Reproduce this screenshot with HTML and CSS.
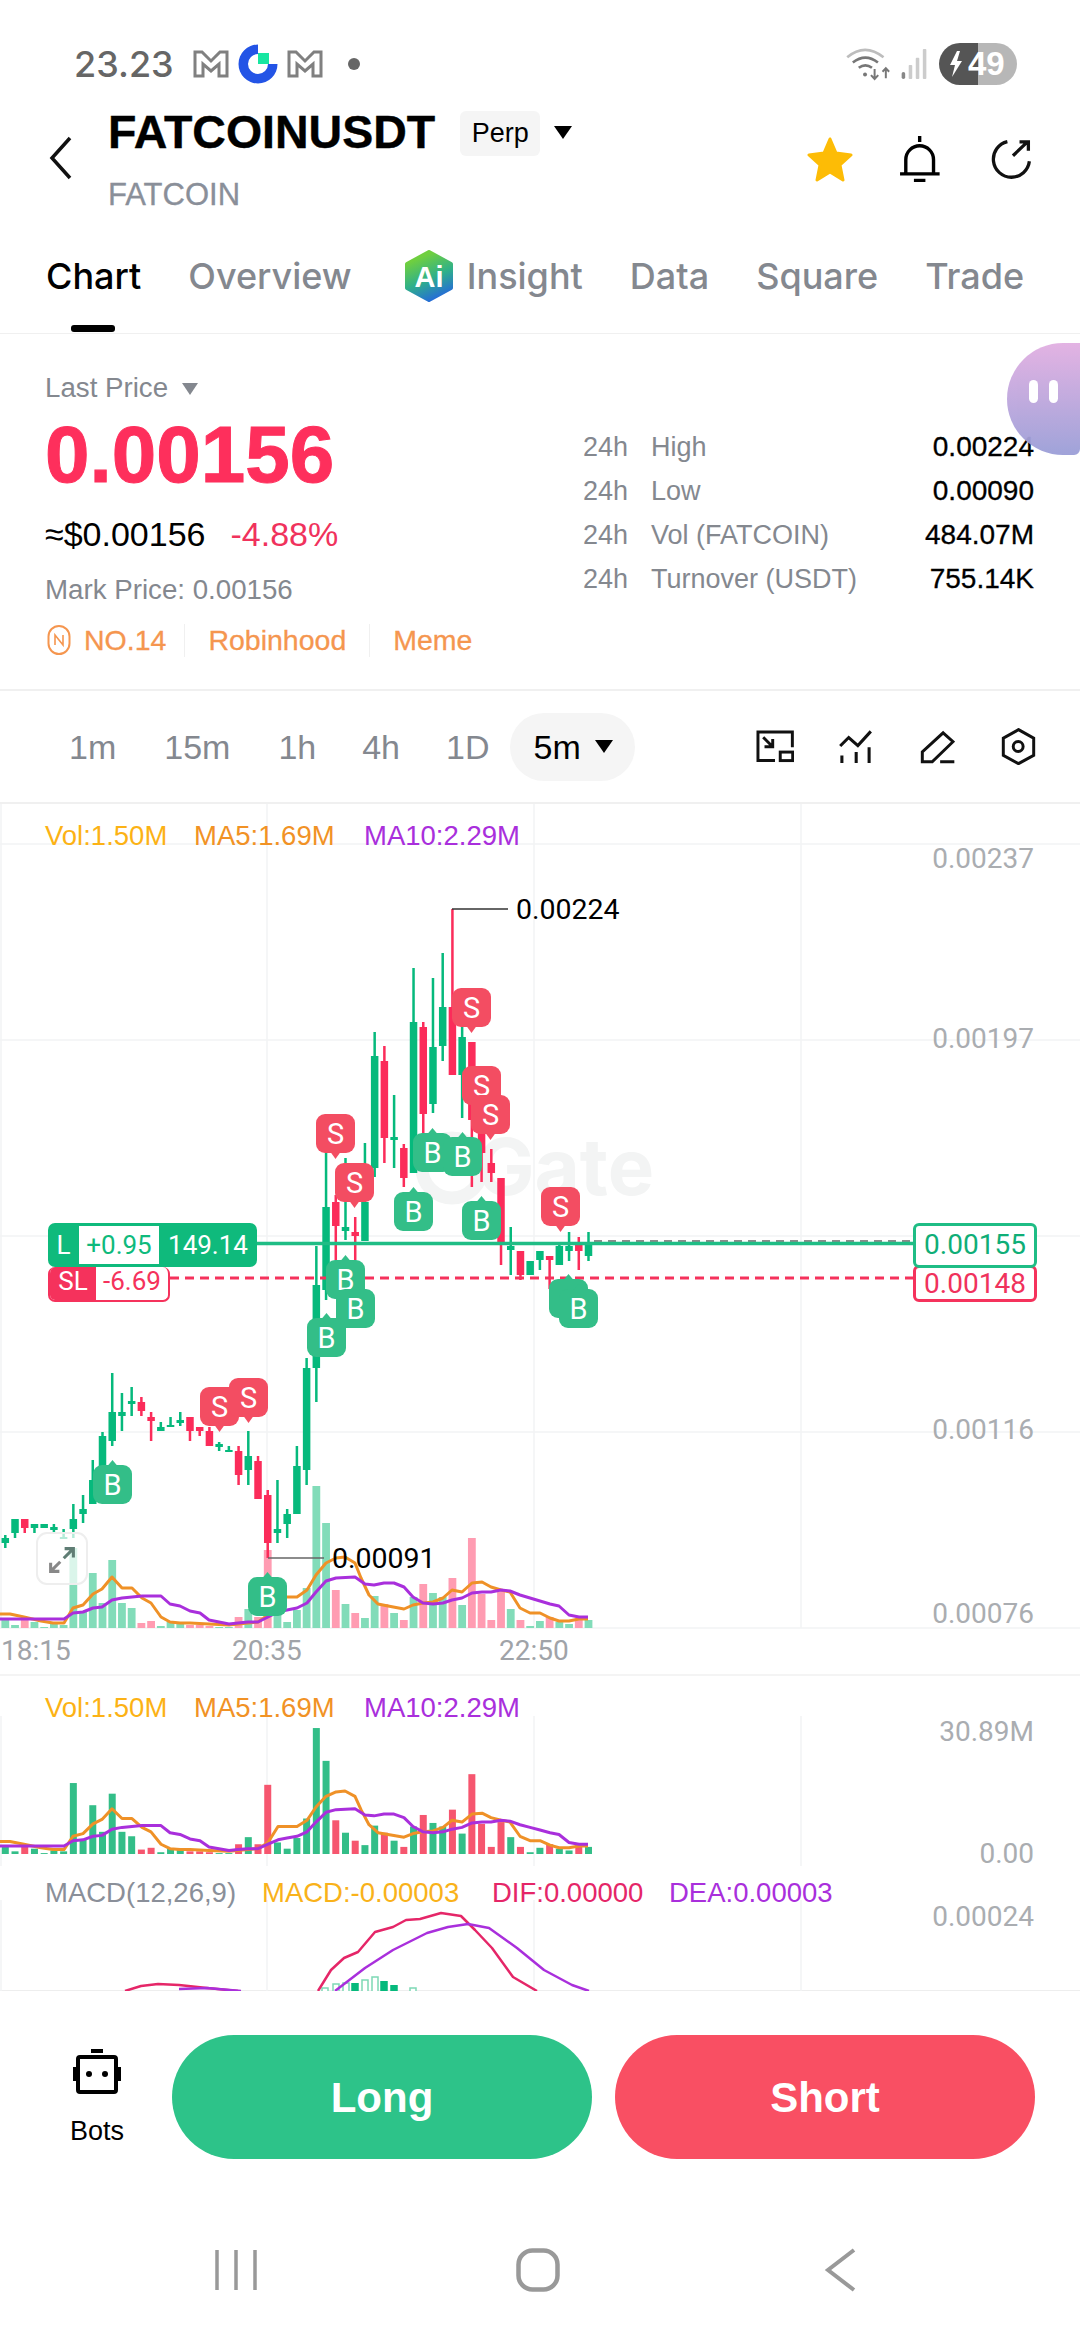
FILE: index.html
```html
<!DOCTYPE html>
<html lang="en">

<head>
    <meta charset="UTF-8">
    <meta name="viewport" content="width=device-width, initial-scale=1.0">
    <link rel="stylesheet" href="styles.css">
    <title>FATCOINUSDT</title>
</head>

<body>
    <div class="page">
        <div class="status">
            <span class="clock">23.23</span>
            <svg class="mail" viewBox="0 0 36 28"><path d="M2 26V2h7l9 9 9-9h7v24h-8V14l-8 7-8-7v12z" /></svg>
            <svg class="gate-logo" viewBox="-20 -20 40 40">
                <path fill="#2354e6" d="M0-19.5A19.5 19.5 0 1 0 19.5 0H10A10 10 0 1 1 0-10z" />
                <rect x="0" y="-11" width="11" height="11" fill="#17e6a1" />
            </svg>
            <svg class="mail" viewBox="0 0 36 28"><path d="M2 26V2h7l9 9 9-9h7v24h-8V14l-8 7-8-7v12z" /></svg>
            <span class="status-dot"></span>
            <div class="status-right">
                <svg class="wifi" viewBox="80 48 135 100" fill="none">
                    <path d="M83 76q54-45 110 0" stroke="#bdbdbd" stroke-width="8" />
                    <path d="M100 92q38-30 76 0" stroke="#777" stroke-width="8" />
                    <path d="M118 108q20-15 40 0" stroke="#777" stroke-width="8" />
                    <circle cx="137" cy="128" r="6" fill="#777" />
                    <path d="M166 112v30M155 130l11 12 11-12M200 140v-30M190 120l10-11 10 11" stroke="#777" stroke-width="6" />
                </svg>
                <svg class="signal" viewBox="0 0 28 34">
                    <rect x="0" y="26" width="4" height="8" rx="2" fill="#888" />
                    <rect x="8" y="18" width="4" height="16" rx="1" fill="#ccc" />
                    <rect x="16" y="10" width="4" height="24" rx="1" fill="#ccc" />
                    <rect x="24" y="0" width="4" height="34" rx="1" fill="#ccc" />
                </svg>
                <div class="battery">
                    <svg class="bolt" viewBox="0 0 14 26"><path fill="#fff" d="M8 0 1 14h5l-3 12 10-16H8l3-10z" /></svg>
                    <span>49</span>
                </div>
            </div>
        </div>

        <header class="top">
            <svg class="back" viewBox="0 0 24 44" fill="none"><path d="M21 2 3 22l18 20" stroke="#111" stroke-width="3.5" /></svg>
            <div class="pair">
                <div class="pair-line">
                    <h1>FATCOINUSDT</h1>
                    <span class="perp">Perp</span>
                    <span class="caret caret-dark"></span>
                </div>
                <div class="pair-sub">FATCOIN</div>
            </div>
            <div class="top-icons">
                <svg class="star" viewBox="0 0 48 46"><path fill="#fdbc06" stroke="#fdbc06" stroke-width="3" stroke-linejoin="round" d="M24 3l6 14 15 2-11 10 3 15-13-8-13 8 3-15L3 19l15-2z" /></svg>
                <svg class="bell" viewBox="245 315 118 136" fill="none" stroke="#000" stroke-width="10">
                    <path d="M303 315v18M262 425v-40a41 41 0 0 1 82 0v40M245 427h117" />
                    <path d="M286 447h34" stroke-width="11" />
                </svg>
                <svg class="share" viewBox="512 325 128 126" fill="none" stroke="#111" stroke-width="10">
                    <path d="M568 335a55 55 0 1 0 67 60" />
                    <path d="M585 378l45-43M605 336h27v27" />
                </svg>
            </div>
        </header>

        <nav class="tabs">
            <span class="tab tab-on">Chart</span>
            <span class="tab">Overview</span>
            <span class="tab tab-ai">
                <svg class="ai-icon" viewBox="0 0 48 52">
                    <defs>
                        <linearGradient id="aiFill" x1="0.3" y1="0" x2="0.7" y2="1">
                            <stop offset="0.1" stop-color="#6fcf3f" />
                            <stop offset="0.55" stop-color="#2fb08a" />
                            <stop offset="1" stop-color="#2467dd" />
                        </linearGradient>
                    </defs>
                    <path fill="url(#aiFill)" stroke="url(#aiFill)" stroke-width="4" stroke-linejoin="round" d="M24 2l22 12v24L24 50 2 38V14z" />
                    <text class="ai-text" x="24" y="37">Ai</text>
                </svg>
                Insight
            </span>
            <span class="tab">Data</span>
            <span class="tab">Square</span>
            <span class="tab">Trade</span>
            <span class="tab-bar"></span>
        </nav>

        <section class="market">
            <div class="market-left">
                <div class="last-price">Last Price <span class="caret caret-grey"></span></div>
                <div class="price">0.00156</div>
                <div class="price-sub"><span>≈$0.00156</span><span class="change">-4.88%</span></div>
                <div class="mark">Mark Price: 0.00156</div>
                <div class="tags">
                    <svg class="rank" viewBox="0 0 24 32" fill="none">
                        <rect x="1.5" y="2" width="21" height="28" rx="10.5" stroke="#f5964f" stroke-width="2" />
                        <path d="M8 21V11l8 10V11" stroke="#f5964f" stroke-width="1.6" />
                    </svg>
                    <span class="tag tag-first">NO.14</span>
                    <span class="tag tag-line">Robinhood</span>
                    <span class="tag tag-line">Meme</span>
                </div>
            </div>
            <div class="market-right">
                <div class="stat"><span class="stat-h">24h</span><span class="stat-name">High</span><span class="stat-val">0.00224</span></div>
                <div class="stat"><span class="stat-h">24h</span><span class="stat-name">Low</span><span class="stat-val">0.00090</span></div>
                <div class="stat"><span class="stat-h">24h</span><span class="stat-name">Vol (FATCOIN)</span><span class="stat-val">484.07M</span></div>
                <div class="stat"><span class="stat-h">24h</span><span class="stat-name">Turnover (USDT)</span><span class="stat-val">755.14K</span></div>
            </div>
            <div class="bubble"><i></i><i></i></div>
        </section>

        <div class="intervals">
            <span class="iv">1m</span>
            <span class="iv">15m</span>
            <span class="iv">1h</span>
            <span class="iv iv-pull">4h</span>
            <span class="iv iv-pull">1D</span>
            <span class="iv iv-on">5m <span class="caret caret-dark"></span></span>
            <div class="tools">
                <svg class="tool-a" viewBox="40 33 116 100" fill="none" stroke="#111" stroke-width="9">
                    <path d="M98 126H46V39h105v46" />
                    <rect x="114" y="100" width="38" height="26" />
                    <path d="M62 55l28 28M66 84h25V60" />
                </svg>
                <svg class="tool-b" viewBox="295 33 96 97" fill="none" stroke="#111" stroke-width="9">
                    <path d="M298 80l25-25 27 24 38-42M303 108v22M345 98v32M383 84v46" />
                </svg>
                <svg class="tool-c" viewBox="536 28 106 102" fill="none" stroke="#111" stroke-width="9">
                    <path d="M606 36l30 27-63 61h-30V94zM597 124h43" />
                </svg>
                <svg class="tool-d" viewBox="784 28 104 112" fill="none" stroke="#111" stroke-width="9">
                    <path d="M836 33l46 26v52l-46 25-46-25V59z" />
                    <circle cx="835" cy="84" r="15" />
                </svg>
            </div>
        </div>

        <div class="chart">
            <svg id="chartCanvas" class="canvas" viewBox="0 804 1080 1187"></svg>

            <div class="pos pos-long">
                <span class="pos-side">L</span>
                <span class="pos-pnl">+0.95</span>
                <span class="pos-size">149.14</span>
            </div>
            <div class="pos pos-stop">
                <span class="pos-side">SL</span>
                <span class="pos-pnl">-6.69</span>
            </div>

            <div class="price-tag tag-stop">0.00148</div>
            <div class="price-tag tag-last">0.00155</div>

            <div class="expand">
                <svg viewBox="0 0 32 32" fill="none" stroke-width="3.5">
                    <path d="M18 14 29 3M19 3h10v10" stroke="#5f7d74" />
                    <path d="M14 18 3 29M13 29H3V19" stroke="#888" />
                </svg>
            </div>
        </div>

        <div class="actions">
            <div class="bots">
                <svg class="bot-icon" viewBox="0 0 48 46">
                    <rect x="18" y="0" width="12" height="4" fill="#000" />
                    <rect x="5" y="8" width="38" height="35" rx="2" fill="none" stroke="#000" stroke-width="4" />
                    <rect x="0" y="18" width="3" height="14" fill="#000" />
                    <rect x="45" y="18" width="3" height="14" fill="#000" />
                    <circle cx="16" cy="25" r="3" fill="#000" />
                    <circle cx="32" cy="25" r="3" fill="#000" />
                </svg>
                <span>Bots</span>
            </div>
            <button class="trade trade-long">Long</button>
            <button class="trade trade-short">Short</button>
        </div>

        <div class="navbar">
            <svg class="nav-icon" viewBox="0 0 44 44" fill="none" stroke="#999" stroke-width="3.5">
                <path d="M3 2v40M22 2v40M41 2v40" />
            </svg>
            <svg class="nav-icon" viewBox="0 0 44 44" fill="none" stroke="#999" stroke-width="4.5">
                <rect x="2.5" y="2.5" width="39" height="39" rx="14" />
            </svg>
            <svg class="nav-icon" viewBox="0 0 44 44" fill="none" stroke="#999" stroke-width="4">
                <path d="M36 2 10 22l26 20" />
            </svg>
        </div>
    </div>
    <script src="chart.js"></script>
</body>

</html>
```

FILE: styles.css
```css
* {
    box-sizing: border-box;
}

body {
    font-family: 'Liberation Sans', sans-serif;
    margin: 0;
    padding: 0;
    background-color: #fff;
    color: #000;
}

.page {
    width: 1080px;
    height: 2340px;
    overflow: hidden;
    position: relative;
}

/* status bar */
.status {
    height: 100px;
    padding: 43px 63px 0 74px;
    display: flex;
    align-items: center;
}

.status > * {
    margin-top: -15px;
}

.clock {
    font-family: 'Inter', sans-serif;
    font-size: 36px;
    font-weight: 500;
    color: #666;
    width: 119px;
}

.mail {
    width: 36px;
    height: 28px;
    fill: #fff;
    stroke: #808080;
    stroke-width: 3;
}

.gate-logo {
    width: 40px;
    height: 40px;
    margin-left: 9px;
    margin-right: 9px;
}

.status-dot {
    width: 12px;
    height: 12px;
    border-radius: 50%;
    background-color: #666;
    margin-left: 25px;
}

.status-right {
    margin-left: auto;
    display: flex;
    align-items: center;
}

.wifi {
    width: 45px;
    height: 33px;
}

.signal {
    width: 28px;
    height: 30px;
    margin-left: 9px;
}

.battery {
    width: 78px;
    height: 42px;
    margin-left: 11px;
    border-radius: 21px;
    background: linear-gradient(90deg, #555 50%, #b7b7b7 50%);
    color: #fff;
    font-size: 33px;
    font-weight: 700;
    display: flex;
    align-items: center;
    padding-left: 10px;
}

.bolt {
    width: 14px;
    height: 26px;
    margin-right: 5px;
}

/* header */
.top {
    height: 127px;
    display: flex;
    align-items: flex-start;
    position: relative;
}

.back {
    width: 24px;
    height: 44px;
    margin: 36px 0 0 49px;
}

.pair {
    margin-left: 35px;
}

.pair-line {
    display: flex;
    align-items: center;
    height: 64px;
}

.pair-line h1 {
    margin: 0;
    font-size: 46.5px;
    font-weight: 700;
    -webkit-text-stroke: 0.4px #000;
}

.perp {
    margin-left: 25px;
    width: 80px;
    height: 45px;
    line-height: 45px;
    text-align: center;
    font-size: 27px;
    background-color: #f5f5f5;
    border-radius: 6px;
    margin-top: 2px;
}

.caret {
    display: inline-block;
    width: 0;
    height: 0;
    border-left: 9.5px solid transparent;
    border-right: 9.5px solid transparent;
    border-top: 13px solid #000;
}

.caret-dark {
    margin-left: 14px;
}

.caret-grey {
    border-left-width: 8.5px;
    border-right-width: 8.5px;
    border-top: 12px solid #84888f;
    margin-left: 6px;
    vertical-align: 2px;
}

.pair-sub {
    margin-top: 16px;
    font-size: 31px;
    color: #8a8f99;
    line-height: 30px;
    -webkit-text-stroke: 0.3px #8a8f99;
}

.top-icons {
    position: absolute;
    left: 806px;
    top: 36px;
    display: flex;
    align-items: center;
}

.star {
    width: 48px;
    height: 46px;
}

.bell {
    width: 40px;
    height: 46px;
    margin-left: 46px;
}

.share {
    width: 42px;
    height: 42px;
    margin-left: 49px;
}

/* tabs */
.tabs {
    height: 107px;
    border-bottom: 1px solid #f0f0f0;
    display: flex;
    align-items: center;
    padding: 0 0 8px 46px;
    position: relative;
    gap: 47px;
    font-family: 'Inter', sans-serif;
}

.tab {
    font-size: 36px;
    font-weight: 500;
    color: #84888f;
    display: flex;
    align-items: center;
}

.tab-on {
    color: #000;
}

.tab-ai {
    margin-left: 6px;
}

.ai-icon {
    width: 48px;
    height: 52px;
    margin-right: 14px;
}

.ai-text {
    font-family: 'Liberation Sans', sans-serif;
    font-size: 29px;
    font-weight: 700;
    fill: #fff;
    text-anchor: middle;
}

.tab-bar {
    position: absolute;
    left: 71px;
    bottom: 1px;
    width: 44px;
    height: 7px;
    background-color: #000;
    border-radius: 3px;
}

/* price block */
.market {
    height: 357px;
    border-bottom: 2px solid #f0f0f0;
    padding: 0 46px 0 45px;
    display: flex;
    position: relative;
}

.market-left {
    padding-top: 38px;
    width: 538px;
}

.last-price,
.mark {
    font-size: 27.7px;
    line-height: 32px;
    color: #84888f;
}

.price {
    margin-top: 6px;
    font-size: 80px;
    font-weight: 700;
    line-height: 90px;
    color: #fe2f5c;
    -webkit-text-stroke: 1px #fe2f5c;
}

.price-sub {
    margin-top: 14px;
    font-size: 34px;
    line-height: 40px;
    display: flex;
    gap: 25px;
}

.change {
    color: #f0325c;
}

.mark {
    margin-top: 20px;
}

.tags {
    margin-top: 18px;
    height: 32px;
    display: flex;
    align-items: center;
}

.rank {
    width: 24px;
    height: 32px;
    margin: 0 13px 0 2px;
}

.tag {
    font-size: 28.5px;
    color: #f5964f;
    -webkit-text-stroke: 0.3px #f5964f;
}

.tag-first {
    margin-right: -5px;
}

.tag-line {
    margin-left: 23px;
    padding-left: 23px;
    border-left: 1px solid #f0f0f0;
}

.market-right {
    flex: 1;
    padding-top: 91px;
}

.stat {
    height: 44px;
    display: flex;
    align-items: center;
    font-size: 27px;
}

.stat-h {
    width: 68px;
    color: #84888f;
}

.stat-name {
    color: #84888f;
}

.stat-val {
    margin-left: auto;
    font-size: 28px;
    -webkit-text-stroke: 0.3px #000;
}

.bubble {
    position: absolute;
    right: 0;
    top: 9px;
    width: 73px;
    height: 112px;
    border-radius: 56px 0 6px 56px;
    background: linear-gradient(180deg, #e2afe2, #9b9fd8);
    opacity: 0.95;
    display: flex;
    justify-content: center;
    align-items: center;
    gap: 11px;
    padding-bottom: 16px;
}

.bubble i {
    width: 9px;
    height: 23px;
    background-color: #fff;
    border-radius: 5px;
}

/* interval row */
.intervals {
    height: 113px;
    border-bottom: 2px solid #f0f0f0;
    padding: 0 44px 0 45px;
    display: flex;
    align-items: center;
}

.iv {
    padding: 0 24px;
    font-size: 34px;
    color: #84888f;
    height: 68px;
    line-height: 68px;
}

.iv-pull {
    margin-left: -2px;
}

.iv-on {
    width: 125px;
    margin-left: -4px;
    padding: 0 0 0 24px;
    color: #000;
    background-color: #f5f5f5;
    border-radius: 34px;
    white-space: nowrap;
}

.iv-on .caret {
    margin-left: 5px;
    vertical-align: 6px;
}

.tools {
    margin-left: auto;
    display: flex;
    align-items: center;
}

.tool-a {
    width: 38px;
    height: 33px;
}

.tool-b {
    width: 33px;
    height: 33px;
    margin-left: 45px;
}

.tool-c {
    width: 35px;
    height: 34px;
    margin-left: 48px;
}

.tool-d {
    width: 35px;
    height: 37px;
    margin-left: 46px;
}

/* chart */
.chart {
    height: 1187px;
    border-bottom: 1px solid #eee;
    position: relative;
}

.canvas {
    display: block;
    width: 1080px;
    height: 1187px;
}

.legend {
    font-size: 27.5px;
}

.axis {
    font-family: 'Roboto', sans-serif;
    font-size: 28px;
    fill: #aaadb1;
    text-anchor: end;
}

.axis-time {
    text-anchor: start;
    fill: #a0a3a8;
}

.extreme {
    font-family: 'Roboto', sans-serif;
    font-size: 28.5px;
    fill: #000;
}

.mark-text {
    font-family: 'Roboto', sans-serif;
    font-size: 29px;
    fill: #fff;
    text-anchor: middle;
}

.watermark {
    font-family: 'Inter', sans-serif;
    font-size: 78px;
    font-weight: 700;
    fill: #f3f4f4;
}

.pos {
    position: absolute;
    left: 48px;
    display: flex;
    font-family: 'Roboto', sans-serif;
    font-size: 26px;
    border-radius: 7px;
    overflow: hidden;
    align-items: stretch;
}

.pos-long {
    top: 419px;
    width: 209px;
    height: 44px;
    background-color: #0fba7c;
    color: #fff;
    padding: 3px 0;
    z-index: 2;
}

.pos-stop {
    top: 463px;
    width: 122px;
    height: 35px;
    background-color: #fff;
    border: 2px solid #f5325c;
    border-top: 0;
    color: #f5325c;
}

.pos-side {
    display: flex;
    align-items: center;
    justify-content: center;
}

.pos-long .pos-side {
    width: 31px;
}

.pos-stop .pos-side {
    width: 46px;
    padding-bottom: 6px;
    background-color: #f5325c;
    color: #fff;
}

.pos-pnl {
    display: flex;
    align-items: center;
    justify-content: center;
    flex: 1;
}

.pos-stop .pos-pnl {
    padding-bottom: 6px;
}

.pos-long .pos-pnl {
    flex: none;
    width: 80px;
    background-color: #fff;
    color: #0fba7c;
}

.pos-size {
    flex: 1;
    display: flex;
    align-items: center;
    justify-content: center;
}

.price-tag {
    position: absolute;
    left: 913px;
    width: 124px;
    font-family: 'Roboto', sans-serif;
    font-size: 28px;
    text-align: center;
    background-color: #fff;
    border-radius: 6px;
}

.tag-last {
    top: 419px;
    height: 45px;
    line-height: 38px;
    border: 3px solid #1fbd85;
    color: #0fae77;
}

.tag-stop {
    top: 461px;
    height: 37px;
    line-height: 26px;
    padding-top: 3px;
    border: 3px solid #f5325c;
    color: #f0325c;
}

.expand {
    position: absolute;
    left: 36px;
    top: 728px;
    width: 52px;
    height: 53px;
    background-color: rgba(255, 255, 255, 0.7);
    border: 2px solid #eeeeee;
    border-radius: 11px;
    padding: 12px 9px;
}

.expand svg {
    display: block;
    width: 30px;
    height: 28px;
}

/* bottom actions */
.actions {
    height: 188px;
    padding-top: 44px;
    display: flex;
    align-items: flex-start;
}

.bots {
    width: 172px;
    display: flex;
    flex-direction: column;
    align-items: center;
    padding: 14px 0 0 22px;
}

.bot-icon {
    width: 48px;
    height: 46px;
}

.bots span {
    margin-top: 21px;
    font-size: 27px;
}

.trade {
    width: 420px;
    height: 124px;
    border: 0;
    border-radius: 62px;
    font-family: inherit;
    font-size: 42px;
    font-weight: 700;
    color: #fff;
    padding-top: 2px;
}

.trade-long {
    background-color: #2dc389;
}

.trade-short {
    margin-left: 23px;
    background-color: #f94f63;
}

.navbar {
    height: 160px;
    padding: 69px 0 0 85px;
    display: grid;
    grid-template-columns: repeat(3, 302px);
    justify-items: center;
    align-items: start;
}

.nav-icon {
    width: 44px;
    height: 44px;
}
```

FILE: chart.js
```js
const svg = document.getElementById("chartCanvas");
const NS = "http://www.w3.org/2000/svg";

const GREEN = "#06b97c";
const RED = "#fb2c5a";

// index -> x position of a candle
function cx(i) {
    return 5.3 + 9.72 * i;
}

function add(tag, attrs, text) {
    const el = document.createElementNS(NS, tag);
    for (const key in attrs) el.setAttribute(key, attrs[key]);
    if (text) el.textContent = text;
    svg.appendChild(el);
    return el;
}

function line(x1, y1, x2, y2, color, width, dash) {
    const attrs = { x1, y1, x2, y2, stroke: color, "stroke-width": width };
    if (dash) attrs["stroke-dasharray"] = dash;
    return add("line", attrs);
}

function rect(x, y, w, h, color) {
    return add("rect", { x, y, width: w, height: h, fill: color });
}

function poly(points, color, width) {
    const pts = points.map(p => p[0] + "," + p[1]).join(" ");
    return add("polyline", {
        points: pts, fill: "none", stroke: color,
        "stroke-width": width, "stroke-linejoin": "round"
    });
}

// grid
const GRID = "#f2f3f4";
[1, 267, 534, 801].forEach(x => {
    line(x, 804, x, 1628, GRID, 1.5);
    line(x, 1716, x, 1866, GRID, 1.5);
    line(x, 1900, x, 1991, GRID, 1.5);
});
[844, 1040, 1236, 1432, 1628].forEach(y => line(0, y, 1080, y, GRID, 1.5));
line(0, 1675, 1080, 1675, "#f0f0f0", 1.5);

// watermark
add("circle", { cx: 452, cy: 1168, r: 30, fill: "none", stroke: "#f3f4f4", "stroke-width": 13 });
add("text", { x: 476, y: 1195, class: "watermark" }, "Gate");

// volume: [top of the bar in the main pane, up]
const volume = [
    [1620, 1], [1625, 1], [1620, 0], [1622, 1], [1627, 1], [1624, 1], [1625, 1], [1548, 1], [1612, 1],
    [1573, 1], [1603, 1], [1560, 1], [1603, 1], [1608, 1], [1623, 0], [1621, 0], [1626, 1], [1622, 1],
    [1622, 1], [1625, 0], [1625, 0], [1626, 0], [1627, 1], [1627, 1], [1617, 0], [1609, 1], [1617, 0],
    [1550, 0], [1615, 1], [1622, 1], [1610, 1], [1588, 1], [1486, 1], [1523, 1], [1590, 0], [1604, 1],
    [1613, 0], [1618, 1], [1596, 1], [1604, 0], [1613, 1], [1620, 0], [1597, 1], [1584, 0], [1593, 1],
    [1597, 1], [1578, 0], [1605, 1], [1538, 0], [1594, 0], [1620, 0], [1592, 0], [1609, 1], [1620, 0],
    [1626, 1], [1621, 1], [1617, 0], [1622, 1], [1624, 1], [1618, 0], [1620, 1]
];

volume.forEach((v, i) => {
    rect(cx(i) - 3.9, v[0], 7.8, 1628 - v[0], v[1] ? "#82dcb9" : "#ff9cb2");
    const h = (1628 - v[0]) * 0.887;
    rect(cx(i) - 3.5, 1854 - h, 7, h, v[1] ? "#33be88" : "#f6566f");
});

// moving averages, measured as [x, y] in the main pane
const ma5 = [
    [0, 1614], [10, 1614], [24, 1617], [41, 1621], [53, 1623], [64, 1623], [73, 1608], [83, 1605], [93, 1594],
    [102, 1589], [112, 1577], [122, 1588], [132, 1588], [142, 1598], [151, 1603], [161, 1617], [170, 1622],
    [180, 1623], [190, 1623], [209, 1624], [229, 1625], [248, 1623], [258, 1622], [268, 1615], [278, 1597],
    [287, 1597], [297, 1597], [307, 1590], [316, 1575], [326, 1563], [336, 1558], [345, 1557], [355, 1563],
    [361, 1578], [369, 1595], [378, 1604], [388, 1606], [404, 1609], [413, 1605], [423, 1603], [433, 1602],
    [443, 1598], [452, 1590], [462, 1592], [472, 1583], [482, 1582], [491, 1587], [501, 1590], [510, 1592],
    [520, 1608], [530, 1613], [540, 1613], [550, 1618], [559, 1621], [569, 1621], [579, 1619], [588, 1619]
];
const ma10 = [
    [0, 1619], [64, 1619], [73, 1613], [83, 1612], [93, 1608], [102, 1607], [112, 1600], [122, 1598], [132, 1597],
    [142, 1596], [161, 1596], [170, 1604], [180, 1606], [190, 1611], [200, 1613], [209, 1620], [219, 1622],
    [229, 1624], [238, 1623], [248, 1622], [258, 1622], [268, 1617], [278, 1612], [287, 1610], [297, 1608],
    [307, 1603], [316, 1592], [326, 1581], [336, 1578], [355, 1577], [365, 1584], [374, 1585], [384, 1583],
    [394, 1583], [404, 1587], [413, 1597], [423, 1603], [433, 1604], [443, 1603], [452, 1600], [462, 1598],
    [472, 1593], [482, 1592], [491, 1592], [501, 1590], [510, 1591], [520, 1595], [530, 1598], [540, 1601],
    [550, 1604], [559, 1606], [569, 1615], [579, 1617], [588, 1617]
];

function toVol(points) {
    return points.map(p => [p[0], 1854 - (1628 - p[1]) * 0.887]);
}

poly(ma5, "#ef9127", 3);
poly(ma10, "#a92fdc", 3);
poly(toVol(ma5), "#ef9127", 3);
poly(toVol(ma10), "#a92fdc", 3);

// candles: [wick top, body top, body bottom, wick bottom, up]
const candles = [
    [1535, 1538, 1543, 1548, 1], [1519, 1519, 1533, 1538, 1], [1519, 1519, 1528, 1533, 0], [1524, 1524, 1528, 1533, 1],
    [1524, 1524, 1528, 1528, 1], [1524, 1527, 1530, 1532, 1], [1529, 1537, 1539, 1539, 1], [1504, 1519, 1529, 1538, 1],
    [1495, 1509, 1514, 1523, 1], [1460, 1480, 1504, 1504, 1], [1432, 1436, 1467, 1477, 1], [1373, 1412, 1441, 1446, 1],
    [1393, 1412, 1416, 1431, 1], [1387, 1401, 1404, 1416, 1], [1397, 1402, 1411, 1416, 0], [1412, 1417, 1421, 1441, 0],
    [1422, 1427, 1431, 1431, 1], [1417, 1425, 1427, 1427, 1], [1412, 1420, 1423, 1426, 1], [1417, 1417, 1431, 1441, 0],
    [1427, 1427, 1431, 1436, 0], [1427, 1431, 1446, 1446, 0], [1442, 1444, 1447, 1451, 1], [1446, 1450, 1452, 1452, 1],
    [1446, 1451, 1475, 1485, 0], [1431, 1456, 1470, 1485, 1], [1456, 1461, 1499, 1499, 0], [1490, 1495, 1543, 1558, 0],
    [1480, 1529, 1533, 1543, 1], [1509, 1514, 1524, 1538, 1], [1446, 1466, 1514, 1514, 1], [1358, 1368, 1470, 1485, 1],
    [1246, 1285, 1368, 1402, 1], [1153, 1207, 1290, 1300, 1], [1195, 1202, 1226, 1260, 0], [1158, 1227, 1231, 1240, 1],
    [1217, 1232, 1236, 1260, 0], [1143, 1202, 1241, 1241, 1], [1032, 1056, 1168, 1177, 1], [1046, 1061, 1138, 1163, 0],
    [1095, 1137, 1140, 1168, 1], [1144, 1148, 1178, 1187, 0], [968, 1022, 1173, 1173, 1], [1022, 1027, 1114, 1133, 0],
    [978, 1047, 1104, 1113, 1], [953, 1007, 1046, 1061, 1], [909, 1007, 1075, 1075, 0], [1027, 1037, 1075, 1118, 1],
    [1042, 1042, 1120, 1187, 0], [1100, 1100, 1153, 1182, 0], [1149, 1163, 1173, 1182, 0], [1178, 1178, 1245, 1265, 0],
    [1227, 1246, 1250, 1275, 1], [1251, 1251, 1275, 1280, 0], [1261, 1261, 1275, 1275, 1], [1251, 1251, 1260, 1270, 1],
    [1256, 1256, 1260, 1289, 0], [1242, 1246, 1265, 1265, 1], [1232, 1246, 1251, 1261, 1], [1237, 1245, 1251, 1270, 0],
    [1232, 1242, 1256, 1261, 1]
];

candles.forEach((c, i) => {
    const color = c[4] ? GREEN : RED;
    rect(cx(i) - 1.25, c[0], 2.5, c[3] - c[0], color);
    rect(cx(i) - 3.75, c[1], 7.5, c[2] - c[1], color);
});

// high and low callouts
line(452, 909, 508, 909, "#333", 1.5);
add("text", { x: 516, y: 919, class: "extreme" }, "0.00224");
line(268, 1558, 324, 1558, "#666", 1.5);
add("text", { x: 332, y: 1568, class: "extreme" }, "0.00091");

// position lines
line(594, 1241, 917, 1241, "#666", 1.5, "8 6");
line(170, 1278, 913, 1278, "#f5325c", 3, "9 6");
line(250, 1243.5, 915, 1243.5, "#1fbd85", 3.5);

// trade markers: [left, top, label]
const markers = [
    [93, 1465, "B"], [248, 1577, "B"], [326, 1260, "B"], [336, 1289, "B"], [307, 1318, "B"],
    [394, 1192, "B"], [413, 1133, "B"], [443, 1137, "B"], [462, 1201, "B"], [549, 1279, ""], [559, 1289, "B"],
    [200, 1387, "S"], [229, 1378, "S"], [316, 1114, "S"], [335, 1163, "S"],
    [452, 988, "S"], [462, 1066, "S"], [471, 1095, "S"], [541, 1187, "S"]
];

markers.forEach(m => {
    const x = m[0], y = m[1], mid = x + 19.5;
    const color = m[2] === "S" ? "#f34d62" : "#33be88";
    add("rect", { x, y, width: 39, height: 39, rx: 9, fill: color });
    if (m[2] === "S") add("polygon", { points: `${mid - 5},${y + 38} ${mid + 5},${y + 38} ${mid},${y + 45}`, fill: color });
    else add("polygon", { points: `${mid - 5},${y + 1} ${mid + 5},${y + 1} ${mid},${y - 5}`, fill: color });
    if (m[2]) add("text", { x: mid, y: y + 30, class: "mark-text" }, m[2]);
});

// MACD pane
const dif = [
    [125, 1991], [141, 1986], [158, 1984], [179, 1985], [207, 1988], [238, 1991]
];
const dea = [[179, 1989], [207, 1988], [241, 1991]];
const dif2 = [
    [318, 1991], [331, 1970], [344, 1958], [358, 1952], [375, 1932], [393, 1927], [406, 1920], [420, 1919],
    [441, 1913], [461, 1916], [475, 1930], [492, 1948], [513, 1977], [537, 1991]
];
const dea2 = [
    [335, 1991], [365, 1968], [393, 1950], [427, 1933], [448, 1927], [468, 1924], [489, 1928], [517, 1948],
    [544, 1970], [572, 1985], [589, 1991]
];
poly(dif, "#e52668", 2.5);
poly(dea, "#a92fdc", 2.5);

const macdBars = [
    [325, 1988, 0], [336, 1984, 0], [346, 1983, 0], [355, 1983, 1], [365, 1980, 0], [375, 1977, 0],
    [384, 1981, 1], [394, 1985, 1], [413, 1988, 0]
];
macdBars.forEach(b => {
    if (b[2]) rect(b[0] - 3.75, b[1], 7.5, 1991 - b[1], GREEN);
    else add("rect", { x: b[0] - 3, y: b[1], width: 6, height: 1995 - b[1], fill: "#fff", stroke: "#7dd9b5", "stroke-width": 1.5 });
});

poly(dif2, "#e52668", 2.5);
poly(dea2, "#a92fdc", 2.5);

// legends
function legend(y, items) {
    items.forEach(it => add("text", { x: it[0], y, class: "legend", fill: it[2] }, it[1]));
}
legend(845, [[45, "Vol:1.50M", "#fcb215"], [194, "MA5:1.69M", "#f19225"], [364, "MA10:2.29M", "#a92fdc"]]);
legend(1717, [[45, "Vol:1.50M", "#fcb215"], [194, "MA5:1.69M", "#f19225"], [364, "MA10:2.29M", "#a92fdc"]]);
legend(1902, [[45, "MACD(12,26,9)", "#8a8f99"], [262, "MACD:-0.00003", "#f9b21a"], [492, "DIF:0.00000", "#e52668"], [669, "DEA:0.00003", "#a92fdc"]]);

// axis labels
[["0.00237", 868], ["0.00197", 1048], ["0.00116", 1439], ["0.00076", 1623], ["30.89M", 1741], ["0.00", 1863], ["0.00024", 1926]]
    .forEach(a => add("text", { x: 1034, y: a[1], class: "axis" }, a[0]));
[["18:15", 1], ["20:35", 232], ["22:50", 499]]
    .forEach(a => add("text", { x: a[1], y: 1660, class: "axis axis-time" }, a[0]));
```
